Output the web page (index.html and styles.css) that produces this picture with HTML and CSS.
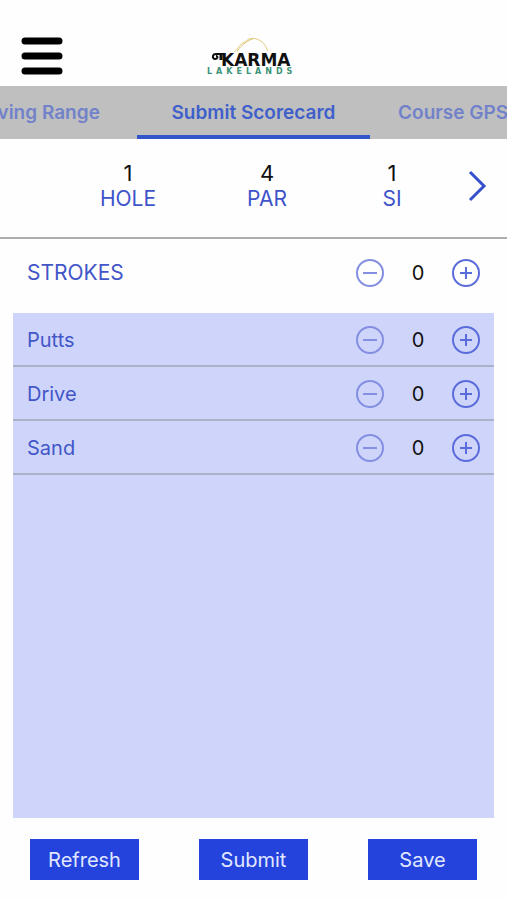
FILE: index.html
```html
<!DOCTYPE html>
<html lang="en">
<head>
<meta charset="utf-8">
<meta name="viewport" content="width=device-width, initial-scale=1">
<title>Submit Scorecard</title>
<link rel="stylesheet" href="styles.css">
</head>
<body>
<svg class="sprite" aria-hidden="true">
  <symbol id="minus" viewBox="0 0 28 28"><circle cx="14" cy="14" r="13"/><path d="M7 14H21"/></symbol>
  <symbol id="plus" viewBox="0 0 28 28"><circle cx="14" cy="14" r="13"/><path d="M8 14H20M14 8V20"/></symbol>
</svg>
<header class="topbar">
  <button class="menu" aria-label="Menu">
    <svg width="42" height="38" viewBox="0 0 42 38"><path d="M4 4H38M4 19H38M4 34H38" stroke="#000" stroke-width="7" stroke-linecap="round"/></svg>
  </button>
  <div class="logo">
    <svg width="96" height="40" viewBox="0 0 96 40" role="img" aria-label="Karma Lakelands">
      <path d="M28 16C33 13 33 8 39 6C44 1 49 2 53 4C58 6 60 11 62 15M31 15C37 8 42 4 47 3" fill="none" stroke="#dec878" stroke-width="1"/>
      <path d="M19 18H10C6 18 6 23 9 23C12 23 12 20 10 20" fill="none" stroke="#111" stroke-width="2"/>
      <path d="M15 18V24" stroke="#111" stroke-width="3"/>
      <text class="logo-name" x="15" y="30">KARMA</text>
      <text class="logo-place" x="1" y="38">LAKELANDS</text>
    </svg>
  </div>
</header>
<nav class="tabs">
  <a class="tab tab-prev" href="#range">Driving Range</a>
  <a class="tab tab-current" href="#scorecard" aria-current="page">Submit Scorecard</a>
  <a class="tab tab-next" href="#gps">Course GPS</a>
</nav>
<main class="scorecard">
  <section class="hole">
    <dl class="stat"><dd>1</dd><dt>HOLE</dt></dl>
    <dl class="stat"><dd>4</dd><dt>PAR</dt></dl>
    <dl class="stat"><dd>1</dd><dt>SI</dt></dl>
    <button class="next" aria-label="Next hole">
      <svg width="20" height="32" viewBox="0 0 20 32"><path d="M2 2L16 16L2 30" fill="none" stroke="#3650cd" stroke-width="3"/></svg>
    </button>
  </section>
  <section class="row strokes">
    <span class="label">STROKES</span>
    <button class="step less" aria-label="Fewer strokes"><svg><use href="#minus"/></svg></button>
    <output>0</output>
    <button class="step" aria-label="More strokes"><svg><use href="#plus"/></svg></button>
  </section>
  <section class="details">
    <div class="row">
      <span class="label">Putts</span>
      <button class="step less" aria-label="Fewer putts"><svg><use href="#minus"/></svg></button>
      <output>0</output>
      <button class="step" aria-label="More putts"><svg><use href="#plus"/></svg></button>
    </div>
    <div class="row">
      <span class="label">Drive</span>
      <button class="step less" aria-label="Lower drive"><svg><use href="#minus"/></svg></button>
      <output>0</output>
      <button class="step" aria-label="Raise drive"><svg><use href="#plus"/></svg></button>
    </div>
    <div class="row">
      <span class="label">Sand</span>
      <button class="step less" aria-label="Lower sand"><svg><use href="#minus"/></svg></button>
      <output>0</output>
      <button class="step" aria-label="Raise sand"><svg><use href="#plus"/></svg></button>
    </div>
  </section>
</main>
<footer class="actions">
  <button>Refresh</button>
  <button>Submit</button>
  <button>Save</button>
</footer>
</body>
</html>
```
FILE: styles.css
```css
* { box-sizing: border-box; }

body {
  display: flex;
  flex-direction: column;
  min-height: 100vh;
  margin: 0;
  background: #fefefe;
  color: #111;
  font-family: Inter, "Liberation Sans", sans-serif;
  font-size: 20px;
  line-height: 26px;
}

button {
  padding: 0;
  border: 0;
  background: none;
  font: inherit;
  cursor: pointer;
}

svg { display: block; }
.sprite { display: none; }

.topbar {
  display: grid;
  grid-template-columns: 1fr auto 1fr;
  align-items: center;
  padding: 36px 21px 10px;
}

.menu { justify-self: start; }

.logo-name {
  font: bold 17px "DejaVu Sans", sans-serif;
  fill: #111;
}

.logo-place {
  font: bold 8px "DejaVu Sans", sans-serif;
  letter-spacing: 4px;
  fill: #3d9277;
}

.tabs {
  display: flex;
  height: 53px;
  overflow: hidden;
  background: #bfbfbf;
}

.tab {
  display: flex;
  flex: 0 0 27%;
  align-items: center;
  min-width: 0;
  border-bottom: 4px solid transparent;
  padding-top: 4px;
  color: #7282ca;
  font-size: 19px;
  font-weight: 600;
  text-decoration: none;
  white-space: nowrap;
}

.tab-prev { justify-content: flex-end; padding-right: 37px; }
.tab-next { padding-left: 28px; }

.tab-current {
  flex: 0 0 46%;
  justify-content: center;
  border-color: #3355cc;
  color: #405fcb;
}

.scorecard {
  display: flex;
  flex: 1;
  flex-direction: column;
}

.hole {
  display: grid;
  grid-template-columns: 140fr 138fr 112fr 59fr;
  padding: 21px 0 25px 58px;
  border-bottom: 2px solid #adadad;
}

.stat {
  display: flex;
  flex-direction: column;
  margin: 0;
  font-size: 22px;
  text-align: center;
}

.stat dd { margin: 0; }
.stat dt { color: #3f53ca; font-size: 21px; }

.next { place-self: center; }

.row {
  display: flex;
  align-items: center;
  height: 54px;
  padding: 1px 14px 0;
  border-bottom: 2px solid #acb0c8;
}

.label {
  flex: 1;
  color: #4256c8;
}

.row output {
  width: 68px;
  text-align: center;
}

.step svg {
  width: 28px;
  height: 28px;
  fill: none;
  stroke: #5a6cdb;
  stroke-width: 2;
}

.step.less svg { stroke: #848fe1; }

.strokes {
  height: 66px;
  margin: 0 13px 8px;
  border: 0;
}

.strokes .label { font-size: 21px; }

.details {
  flex: 1;
  margin: 0 13px;
  background: #cfd5fa;
}

.actions {
  display: flex;
  justify-content: space-between;
  padding: 21px 30px 20px;
}

.actions button {
  width: 109px;
  height: 41px;
  background: #2443dc;
  color: #e0e8ff;
}
```
